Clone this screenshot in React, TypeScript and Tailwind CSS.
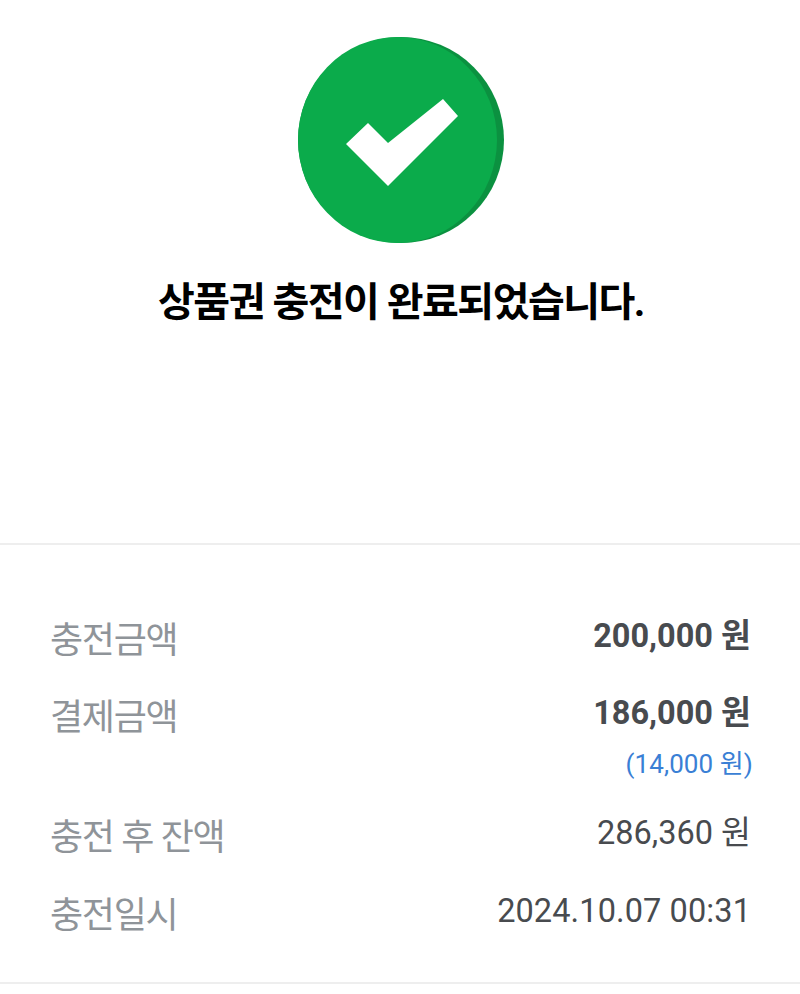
const font = { fontFamily: '"Roboto", "Noto Sans CJK KR", sans-serif' };

function CheckCircle() {
  return (
    <svg width="206" height="206" viewBox="0 0 206 206" className="ml-[2px]">
      <circle cx="103" cy="103" r="103" fill="#0b9140" />
      <ellipse cx="99.5" cy="103" rx="99.5" ry="103" fill="#0bab4b" />
      <path d="M48 107 L70 86 L90 106 L145 62 L160 79 L90 149 Z" fill="#fff" />
    </svg>
  );
}

function Row({ label, value, bold, sub, className, valueClass }: { label: string; value: string; bold?: boolean; sub?: string; className?: string; valueClass?: string }) {
  return (
    <div className={"flex justify-between items-start " + (className || "")}>
      <span className="text-[36px] leading-[44px] mt-[3px] ml-[-1px] text-[#8f9499] tracking-[-1.3px]">{label}</span>
      <div className="flex flex-col items-end">
        <span className={"text-[32.5px] leading-[40px] text-[#484b4f] " + (bold ? "font-bold " : "") + (valueClass || "")}>{value}</span>
        {sub && <span className="text-[26px] leading-[36px] text-[#3a7fd5] mt-[13px] mr-[-2px] tracking-[0.1px]">{sub}</span>}
      </div>
    </div>
  );
}

export default function App() {
  return (
    <div className="w-[800px] h-[994px] bg-white overflow-hidden" style={font}>
      <div className="flex flex-col items-center pt-[37px] h-[545px] border-b-2 border-[#eeeeee]">
        <CheckCircle />
        <h1 className="mt-[32px] ml-[2px] text-[40px] leading-[56px] font-bold text-black tracking-[-1.5px]">상품권 충전이 완료되었습니다.</h1>
      </div>
      <div className="pl-[51px] pr-[49px] pt-[71px] h-[439px] border-b-2 border-[#eeeeee]">
        <Row label="충전금액" value="200,000 원" bold />
        <Row label="결제금액" value="186,000 원" bold sub="(14,000 원)" className="mt-[30px]" />
        <Row label="충전 후 잔액" value="286,360 원" className="mt-[31px]" />
        <Row label="충전일시" value="2024.10.07 00:31" className="mt-[31px]" valueClass="tracking-[0.1px]" />
      </div>
    </div>
  );
}
